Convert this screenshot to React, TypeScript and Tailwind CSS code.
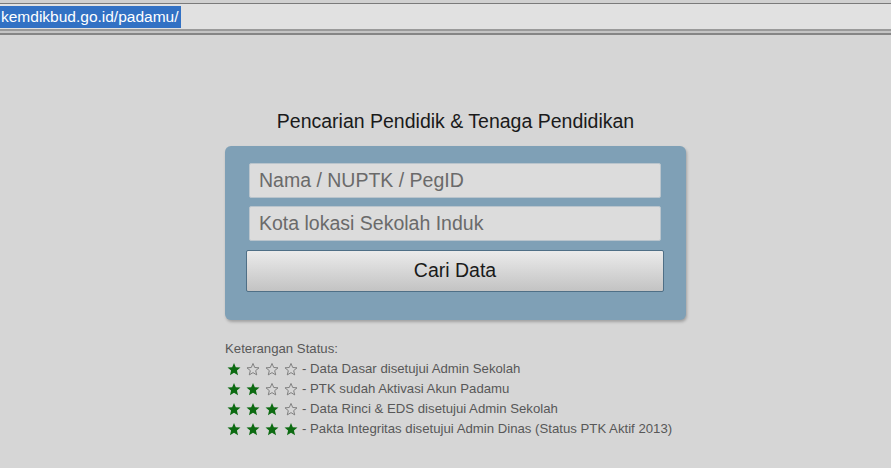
import React from "react";

const Star = ({ filled }: { filled: boolean }) =>
  filled ? (
    <svg width="14" height="14" viewBox="0 0 24 24" className="shrink-0">
      <path d="M12 1.5l3.1 7.4 8 .6-6.1 5.2 1.9 7.8L12 18.3 5.1 22.5 7 14.7.9 9.5l8-.6z" fill="#0d6b12" />
    </svg>
  ) : (
    <svg width="14" height="14" viewBox="0 0 24 24" className="shrink-0">
      <path d="M12 2.5l2.9 6.9 7.4.6-5.7 4.8 1.8 7.3L12 18.2l-6.4 3.9 1.8-7.3L1.7 10l7.4-.6z" fill="none" stroke="#7a7a7a" strokeWidth="1.6" strokeLinejoin="round" />
    </svg>
  );

const rows = [
  { n: 1, t: "- Data Dasar disetujui Admin Sekolah" },
  { n: 2, t: "- PTK sudah Aktivasi Akun Padamu" },
  { n: 3, t: "- Data Rinci & EDS disetujui Admin Sekolah" },
  { n: 4, t: "- Pakta Integritas disetujui Admin Dinas (Status PTK Aktif 2013)" },
];

export default function App() {
  return (
    <div
      className="w-[891px] h-[468px] overflow-hidden bg-[#d6d6d6] flex flex-col"
      style={{ fontFamily: '"Liberation Sans", Arial, sans-serif' }}
    >
      <div className="h-[3px] bg-[#d0d0d0]" />
      <div className="h-[26px] bg-[#e1e1e1] border-t border-[#7a7a7a] flex items-center">
        <span className="bg-[#3271c4] text-white text-[15.5px] leading-[22px] h-[22px] pl-[1px] pr-[2px]">kemdikbud.go.id/padamu/</span>
      </div>
      <div className="h-[2px] bg-[#9a9a9a]" />
      <div className="h-[2px] bg-[#c4c4c4]" />
      <div className="h-[2px] bg-[#858585]" />
      <div className="flex-1 flex flex-col items-center">
        <div className="mt-[75px] text-[19.5px] leading-[22px] text-[#1a1a1a] ml-[20px]">
          Pencarian Pendidik &amp; Tenaga Pendidikan
        </div>
        <div className="mt-[14px] w-[461px] h-[174px] rounded-[6px] bg-[#7fa0b6] shadow-[1px_2px_3px_rgba(0,0,0,0.25)] flex flex-col items-center pt-[17px] ml-[19px]">
          <div className="w-[412px] h-[35px] bg-[#dcdcdc] border border-[#b9c4cc] rounded-[2px] flex items-center pl-[9px] text-[19.5px] text-[#6a6a6a]">
            Nama / NUPTK / PegID
          </div>
          <div className="mt-[8px] w-[412px] h-[35px] bg-[#dcdcdc] border border-[#b9c4cc] rounded-[2px] flex items-center pl-[9px] text-[19.5px] text-[#6a6a6a]">
            Kota lokasi Sekolah Induk
          </div>
          <div className="mt-[9px] w-[418px] h-[42px] rounded-[2px] border border-[#4f6f86] bg-gradient-to-b from-[#ebebeb] to-[#c3c3c3] flex items-center justify-center text-[19.5px] text-[#1a1a1a]">
            Cari Data
          </div>
        </div>
        <div className="self-start ml-[225px] mt-[19px] text-[13.2px] text-[#585858] leading-[20px]">
          <div>Keterangan Status:</div>
          {rows.map((r) => (
            <div key={r.n} className="flex items-center gap-[4px]">
              <div className="flex gap-[5px] pl-[2px] shrink-0">
                {[1, 2, 3, 4].map((i) => (
                  <Star key={i} filled={i <= r.n} />
                ))}
              </div>
              <span>{r.t}</span>
            </div>
          ))}
        </div>
      </div>
    </div>
  );
}
